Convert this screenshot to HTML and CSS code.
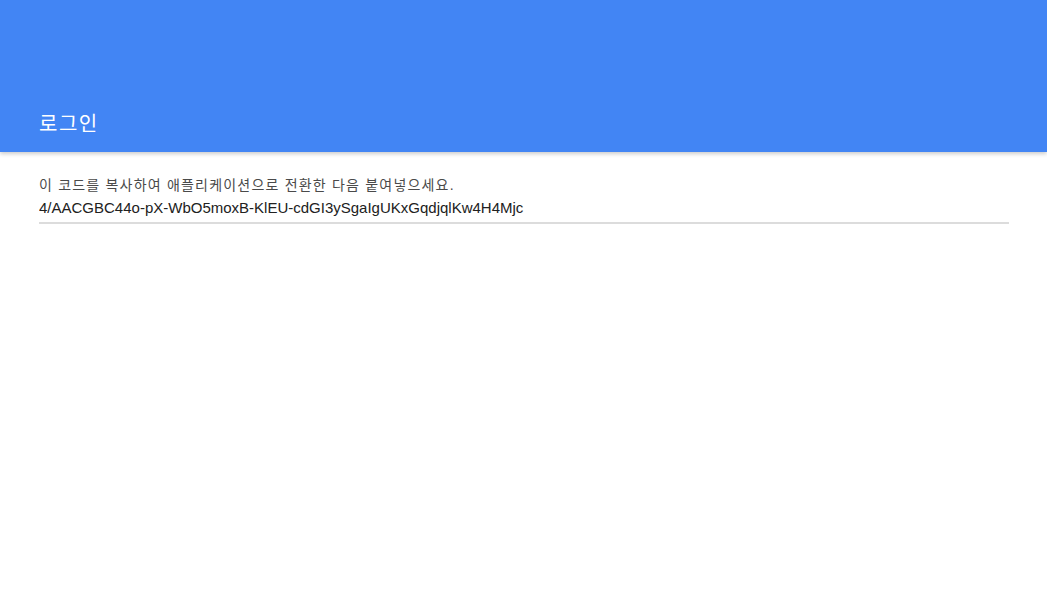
FILE: index.html
```html
<!DOCTYPE html>
<html lang="ko">
<head>
    <meta charset="UTF-8">
    <meta name="viewport" content="width=device-width, initial-scale=1.0">
    <title>로그인</title>
    <link rel="stylesheet" href="styles.css">
</head>
<body>

    <!-- Top bar -->
    <header class="app-bar">
        <h1 class="app-title">로그인</h1>
    </header>

    <!-- Auth code -->
    <main class="content">
        <label class="code-label" for="authCode">이 코드를 복사하여 애플리케이션으로 전환한 다음 붙여넣으세요.</label>
        <input id="authCode" class="code-field" type="text" readonly value="4/AACGBC44o-pX-WbO5moxB-KlEU-cdGI3ySgaIgUKxGqdjqlKw4H4Mjc">
    </main>

</body>
</html>
```

FILE: styles.css
```css
/* Base Reset */
* {
    margin: 0;
    padding: 0;
    box-sizing: border-box;
}

body {
    background-color: #fff;
    font-family: 'Liberation Sans', Arial, 'Noto Sans CJK KR', sans-serif;
    color: #212121;
}

/* Top Bar */
.app-bar {
    height: 152px;
    background-color: #4285f4;
    box-shadow: 0 2px 4px rgba(0, 0, 0, 0.2);
    display: flex;
    align-items: flex-end;
    padding: 0 39px 14px;
}

.app-title {
    font-size: 20px;
    font-weight: normal;
    letter-spacing: 1.5px;
    color: #fff;
    line-height: 28px;
}

/* Content */
.content {
    display: flex;
    flex-direction: column;
    padding: 24px 38px 0 39px;
}

.code-label {
    font-size: 14px;
    letter-spacing: 1.2px;
    color: #4a4a4a;
    line-height: 18px;
}

.code-field {
    font-family: inherit;
    font-size: 15px;
    color: #212121;
    border: none;
    border-bottom: 2px solid #dcdcdc;
    outline: none;
    background: transparent;
    height: 30px;
    padding: 2px 0 4px;
}
```
